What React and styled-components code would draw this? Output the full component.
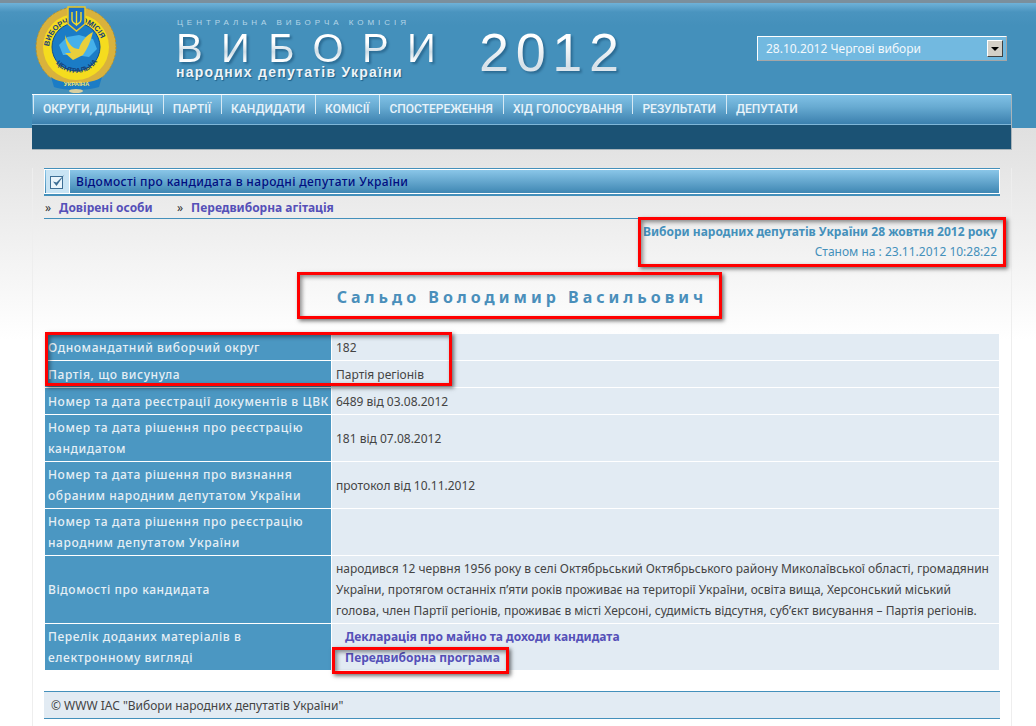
import React from 'react';
import styled, { createGlobalStyle } from 'styled-components';

const GlobalStyle = createGlobalStyle`
  html, body {
    margin: 0;
    padding: 0;
    background: #fff;
    overflow: hidden;
  }
  body {
    font-family: "Noto Sans", "DejaVu Sans", sans-serif;
    font-size: 12px;
    color: #444;
  }
`;

const Page = styled.div`
  position: relative;
  width: 1036px;
  height: 726px;
  overflow: hidden;
  background: linear-gradient(#e0e0e0 129px, #fff 340px);
`;

const HeaderBand = styled.header`
  height: 125px;
  border-top: 3px solid #7b8f9c;
  background: linear-gradient(#6fb2d8 0, #4a94bf 9px, #4490bb 22px);
  padding-left: 32px;
`;

const HeaderInner = styled.div`
  width: 980px;
`;

const TopRow = styled.div`
  display: flex;
  height: 91px;
`;

const LogoWrap = styled.div`
  width: 144px;
  padding: 2px 0 0 3px;
  box-sizing: border-box;
`;

const Brand = styled.div`
  width: 303px;
  padding-top: 14px;
  display: flex;
  flex-direction: column;
`;

const BrandTop = styled.div`
  font: 8px/12px "Liberation Sans", sans-serif;
  letter-spacing: 3.95px;
  color: #b4d6e8;
  padding-left: 1px;
  white-space: nowrap;
`;

const BrandTitle = styled.div`
  font: 40px/38px "Liberation Sans", sans-serif;
  letter-spacing: 18.4px;
  white-space: nowrap;
  background: linear-gradient(#fff 35%, #cfdde6 60%, #fff 85%);
  -webkit-background-clip: text;
  background-clip: text;
  color: transparent;
  filter: drop-shadow(2px 2px 1px #2b6a92);
`;

const BrandSub = styled.div`
  font: bold 14px/12px "Liberation Sans", sans-serif;
  letter-spacing: 1.25px;
  color: #eef4f8;
  text-shadow: 1px 1px 1px #1f5f87;
  white-space: nowrap;
  margin-top: -1px;
`;

const Year = styled.div`
  width: 278px;
  padding-top: 22px;
  font: 54px/54px "Liberation Sans", sans-serif;
  letter-spacing: 6.6px;
  background: linear-gradient(#fff 40%, #d5e0e8 70%, #fff 90%);
  -webkit-background-clip: text;
  background-clip: text;
  color: transparent;
  filter: drop-shadow(2px 2px 1px #2b6a92);
`;

const SelectBox = styled.div`
  margin-top: 33px;
  width: 250px;
  height: 25px;
  box-sizing: border-box;
  display: flex;
  align-items: center;
  justify-content: space-between;
  padding: 0 3px 0 8px;
  background: #72b9e0;
  color: #f2f8fc;
  border: 1px solid;
  border-color: #fff #a6a6a6 #a6a6a6 #fff;
`;

const SelectArrow = styled.span`
  width: 16px;
  height: 17px;
  box-sizing: border-box;
  background: #d4d0c8;
  border: 1px solid;
  border-color: #fff #404040 #404040 #fff;
  display: flex;
  align-items: center;
  justify-content: center;
  &::after {
    content: '';
    border: 4px solid transparent;
    border-top: 4px solid #000;
    border-bottom: 0;
  }
`;

const Nav = styled.nav`
  height: 56px;
  box-sizing: border-box;
  border: 1px solid #a9b4ba;
  border-width: 0 1px 1px 0;
  background: linear-gradient(#1b5274, #1b5274);
`;

const NavBar = styled.ul`
  list-style: none;
  margin: 0;
  padding: 0 0 0 1px;
  height: 29px;
  display: flex;
  border-top: 1px solid #fff;
  border-bottom: 1px solid #7fb6d8;
  background: linear-gradient(#80c1e6, #68abd2 40%, #3b80ae);
`;

const NavItem = styled.li`
  font: 500 12px/29px Roboto, "Liberation Sans", sans-serif;
  color: #e8f3fa;
  padding: 0 10px 0 10px;
  white-space: nowrap;
  position: relative;
  &::before {
    content: '';
    position: absolute;
    left: 0;
    top: 0;
    height: 19px;
    width: 1px;
    background: #d6e9f4;
  }
`;

const Panel = styled.main`
  margin: 40px 0 0 32px;
  width: 980px;
  height: 558px;
  box-sizing: border-box;
  padding: 0 11px;
  border: 1px solid #eee;
  border-width: 0 1px;
`;

const Section = styled.div`
  border-top: 1px solid #4490bb;
  border-bottom: 2px solid #4490bb;
`;

const SectionBar = styled.div`
  height: 23px;
  display: flex;
  align-items: center;
  border: 1px solid #fff;
  border-right-color: #fff;
  background: linear-gradient(#8ac6e8, #3f87b3);
  color: #000d80;
  font-weight: 500;
  letter-spacing: 0.35px;
`;

const SectionIcon = styled.span`
  width: 23px;
  height: 23px;
  margin-right: 6px;
  margin-left: 1px;
  display: flex;
  align-items: center;
  justify-content: center;
  background: #c9e4f4;
  border-right: 1px solid #fff;
`;

const SubNav = styled.div`
  height: 22px;
  display: flex;
  align-items: center;
  border-bottom: 1px solid #4490bb;
`;

const SubItem = styled.span`
  width: 131px;
  padding-left: 1px;
  white-space: nowrap;
  color: #333;
`;

const StrongLink = styled.a`
  margin-left: ${p => p.$indent || 8}px;
  font-weight: 700;
  font-size: 12px;
  color: #5550b8;
`;

const Info = styled.div`
  text-align: right;
  padding: 3px 3px 0 0;
  line-height: 20px;
  color: #4490bb;
`;

const InfoTitle = styled.div`
  font-weight: 700;
`;

const CandidateName = styled.h1`
  margin: 22px 0 23px;
  font-size: 16px;
  line-height: 26px;
  font-weight: 700;
  letter-spacing: 4px;
  text-align: center;
  color: #4a8fbb;
`;

const Sheet = styled.table`
  width: 956px;
  border-collapse: separate;
  border-spacing: 1px;
  table-layout: fixed;
`;

const Label = styled.th`
  width: 283px;
  height: 22px;
  padding: 2px 0 2px 3px;
  background: #4b97c2;
  color: #e6eff5;
  font-weight: 500;
  font-size: 12px;
  line-height: 21px;
  letter-spacing: 0.6px;
  text-align: left;
`;

const Value = styled.td`
  padding: 2px 3px 2px 4px;
  background: #e2ebf3;
  color: #444;
  font-size: 12px;
  line-height: 21px;
`;

const Footer = styled.footer`
  margin-top: 20px;
  height: 26px;
  padding-left: 7px;
  display: flex;
  align-items: center;
  background: #e2ebf3;
  border: 1px solid #4490bb;
  border-width: 1px 0;
`;

const Highlight = styled.div`
  position: absolute;
  box-sizing: border-box;
  left: ${p => p.$x}px;
  top: ${p => p.$y}px;
  width: ${p => p.$w}px;
  height: ${p => p.$h}px;
  border: 3px solid #f00;
  box-shadow: 2px 2px 4px rgba(0, 0, 0, 0.55), inset 2px 2px 4px rgba(0, 0, 0, 0.45);
`;

const navItems = ['ОКРУГИ, ДІЛЬНИЦІ', 'ПАРТІЇ', 'КАНДИДАТИ', 'КОМІСІЇ', 'СПОСТЕРЕЖЕННЯ', 'ХІД ГОЛОСУВАННЯ', 'РЕЗУЛЬТАТИ', 'ДЕПУТАТИ'];

const highlights = [
  { x: 638, y: 217, w: 368, h: 50 },
  { x: 297, y: 272, w: 425, h: 47 },
  { x: 45, y: 332, w: 407, h: 54 },
  { x: 332, y: 647, w: 177, h: 27 },
];

const Logo = () => (
  <svg width="82" height="88" viewBox="0 0 82 88">
    <defs>
      <path id="topArc" d="M14 44 A27 27 0 0 1 68 44" />
      <path id="bottomArc" d="M17 52 A26 26 0 0 0 65 52" />
    </defs>
    <circle cx="41" cy="42" r="40" fill="#d9b23c" />
    <circle cx="41" cy="42" r="40" fill="none" stroke="#b88f25" strokeWidth="1" strokeDasharray="2 2" />
    <circle cx="41" cy="42" r="33" fill="#f5dc1e" />
    <circle cx="41" cy="42" r="24" fill="#1b7cc6" stroke="#10508f" strokeWidth="1" />
    <path d="M24 40 L32 32 L44 30 L58 34 L62 44 L54 52 L40 50 L28 50 Z" fill="#45b0ea" />
    <path d="M30 30 C34 40 38 44 44 44 C46 36 52 30 58 27 C56 36 52 44 48 50 L38 55 L30 48 L36 48 C32 42 30 36 30 30 Z" fill="#e8cf3c" />
    <text fontSize="7.5" fontWeight="700" fill="#14407a" fontFamily="Liberation Sans, sans-serif">
      <textPath href="#topArc" startOffset="3%">ВИБОРЧА  КОМІСІЯ</textPath>
    </text>
    <text fontSize="7" fontWeight="700" fill="#14407a" fontFamily="Liberation Sans, sans-serif">
      <textPath href="#bottomArc" startOffset="12%">ЦЕНТРАЛЬНА</textPath>
    </text>
    <path d="M33 2 H50 V19 L41.500 26 L33 19 Z" fill="#1b6fc0" stroke="#e8c72c" strokeWidth="1.500" />
    <path d="M41.500 6 V20 M37 7 V15 C37 18 40 18 41.500 20 C43 18 46 18 46 15 V7" fill="none" stroke="#f4dc2a" strokeWidth="1.400" />
    <path d="M16 72 C26 80 56 80 67 72 L64 82 C52 86 30 86 19 82 Z" fill="#1b7cc6" />
    <text x="41.500" y="81" textAnchor="middle" fontSize="6" fontWeight="700" fill="#f4e46a" fontFamily="Liberation Sans, sans-serif">УКРАЇНА</text>
    <ellipse cx="41" cy="86" rx="7" ry="2" fill="#d8cfa0" />
  </svg>
);

const CheckIcon = () => (
  <svg width="17" height="17" viewBox="0 0 17 17">
    <rect x="1.500" y="3.500" width="12" height="12" fill="#e9f4fb" stroke="#3d6e95" />
    <path d="M4 8.500 L7.500 13 L15.500 1.500 L7.500 9.500 Z" fill="#3d6e95" />
  </svg>
);

const App = () => (
  <Page>
    <GlobalStyle />
    <HeaderBand>
      <HeaderInner>
        <TopRow>
          <LogoWrap><Logo /></LogoWrap>
          <Brand>
            <BrandTop>ЦЕНТРАЛЬНА ВИБОРЧА КОМІСІЯ</BrandTop>
            <BrandTitle>ВИБОРИ</BrandTitle>
            <BrandSub>народних депутатів України</BrandSub>
          </Brand>
          <Year>2012</Year>
          <SelectBox>
            28.10.2012 Чергові вибори
            <SelectArrow />
          </SelectBox>
        </TopRow>
        <Nav>
          <NavBar>
            {navItems.map(item => <NavItem key={item}>{item}</NavItem>)}
          </NavBar>
        </Nav>
      </HeaderInner>
    </HeaderBand>
    <Panel>
      <Section>
        <SectionBar>
          <SectionIcon><CheckIcon /></SectionIcon>
          Відомості про кандидата в народні депутати України
        </SectionBar>
      </Section>
      <SubNav>
        <SubItem>»<StrongLink>Довірені особи</StrongLink></SubItem>
        <SubItem>»<StrongLink>Передвиборна агітація</StrongLink></SubItem>
      </SubNav>
      <Info>
        <InfoTitle>Вибори народних депутатів України 28 жовтня 2012 року</InfoTitle>
        <div>Станом на : 23.11.2012 10:28:22</div>
      </Info>
      <CandidateName>Сальдо Володимир Васильович</CandidateName>
      <Sheet>
        <tbody>
          <tr><Label>Одномандатний виборчий округ</Label><Value>182</Value></tr>
          <tr><Label>Партія, що висунула</Label><Value>Партія регіонів</Value></tr>
          <tr><Label>Номер та дата реєстрації документів в ЦВК</Label><Value>6489 від 03.08.2012</Value></tr>
          <tr><Label>Номер та дата рішення про реєстрацію кандидатом</Label><Value>181 від 07.08.2012</Value></tr>
          <tr><Label>Номер та дата рішення про визнання обраним народним депутатом України</Label><Value>протокол від 10.11.2012</Value></tr>
          <tr><Label>Номер та дата рішення про реєстрацію народним депутатом України</Label><Value /></tr>
          <tr>
            <Label>Відомості про кандидата</Label>
            <Value>народився 12 червня 1956 року в селі Октябрьський Октябрьського району Миколаївської області, громадянин України, протягом останніх п’яти років проживає на території України, освіта вища, Херсонський міський голова, член Партії регіонів, проживає в місті Херсоні, судимість відсутня, суб’єкт висування – Партія регіонів.</Value>
          </tr>
          <tr>
            <Label>Перелік доданих матеріалів в електронному вигляді</Label>
            <Value>
              <StrongLink $indent={9}>Декларація про майно та доходи кандидата</StrongLink><br />
              <StrongLink $indent={9}>Передвиборна програма</StrongLink>
            </Value>
          </tr>
        </tbody>
      </Sheet>
      <Footer>© WWW IAC "Вибори народних депутатів України"</Footer>
    </Panel>
    {highlights.map(box => <Highlight key={box.y} $x={box.x} $y={box.y} $w={box.w} $h={box.h} />)}
  </Page>
);

export default App;
